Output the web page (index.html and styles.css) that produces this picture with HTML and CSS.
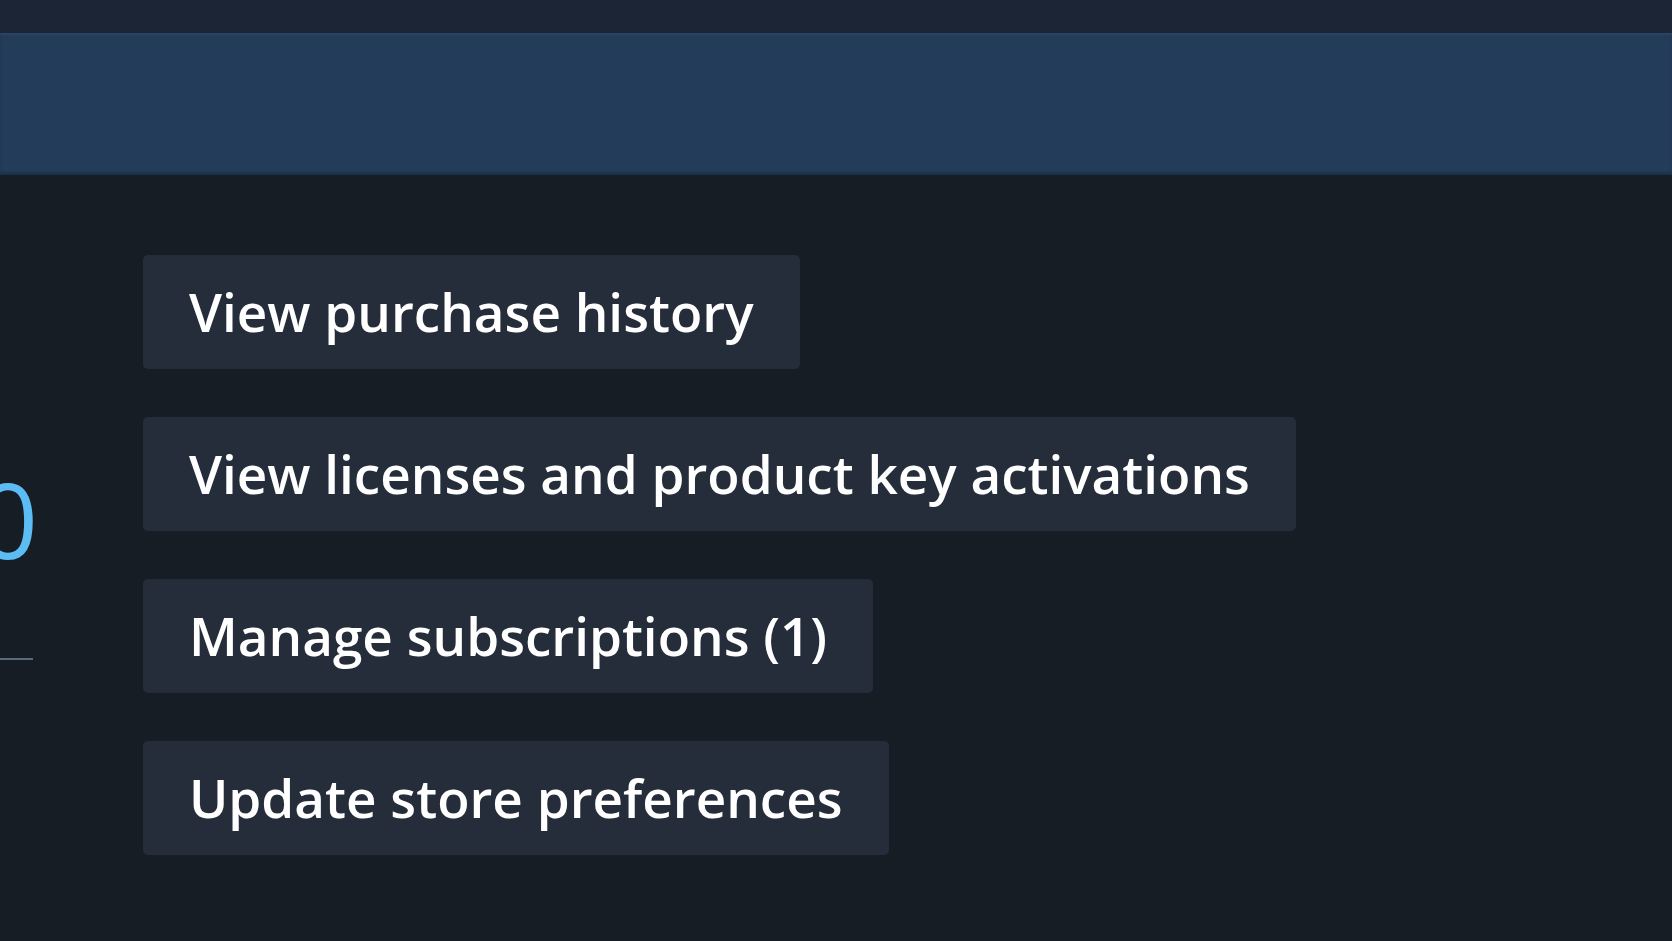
FILE: index.html
```html
<!DOCTYPE html>
<html lang="en">
<head>
<meta charset="utf-8">
<title>Account</title>
<link rel="stylesheet" href="styles.css">
</head>
<body>
  <div class="topstrip"></div>
  <div class="band"></div>
  <main class="content">
    <aside class="wallet">
      <div class="balance">0</div>
      <div class="rule"></div>
    </aside>
    <nav class="actions">
      <a class="action" href="#">View purchase history</a>
      <a class="action" href="#">View licenses and product key activations</a>
      <a class="action" href="#">Manage subscriptions (1)</a>
      <a class="action" href="#">Update store preferences</a>
    </nav>
  </main>
</body>
</html>
```

FILE: styles.css
```css
html, body {
  margin: 0;
  padding: 0;
  height: 100%;
  overflow: hidden;
  background: #171d25;
  font-family: "Open Sans", "Noto Sans", sans-serif;
}

.topstrip {
  height: 33px;
  background: #1b2536;
}

.band {
  height: 142px;
  background: #233c5a;
  box-shadow: inset 0 2px 2px rgba(60, 90, 130, 0.35), inset 0 -2px 3px rgba(10, 20, 35, 0.35);
}

.content {
  display: flex;
  align-items: flex-start;
  gap: 110px;
}

.wallet {
  flex: 0 0 300px;
  min-width: 0;
  margin-left: -267px;
  padding-top: 289px;
  text-align: right;
}

.balance {
  font-size: 105px;
  line-height: 110px;
  color: #5cbcf4;
  white-space: nowrap;
  margin-right: -5px;
}

.rule {
  height: 2px;
  margin-top: 84px;
  background: #5a6a7c;
}

.actions {
  display: flex;
  flex-direction: column;
  align-items: flex-start;
  gap: 48px;
  padding-top: 80px;
}

.action {
  display: block;
  height: 114px;
  line-height: 114px;
  padding: 0 46px;
  background: #242d39;
  border-radius: 5px;
  color: #ffffff;
  font-size: 53px;
  font-weight: 600;
  text-decoration: none;
  white-space: nowrap;
}
```
